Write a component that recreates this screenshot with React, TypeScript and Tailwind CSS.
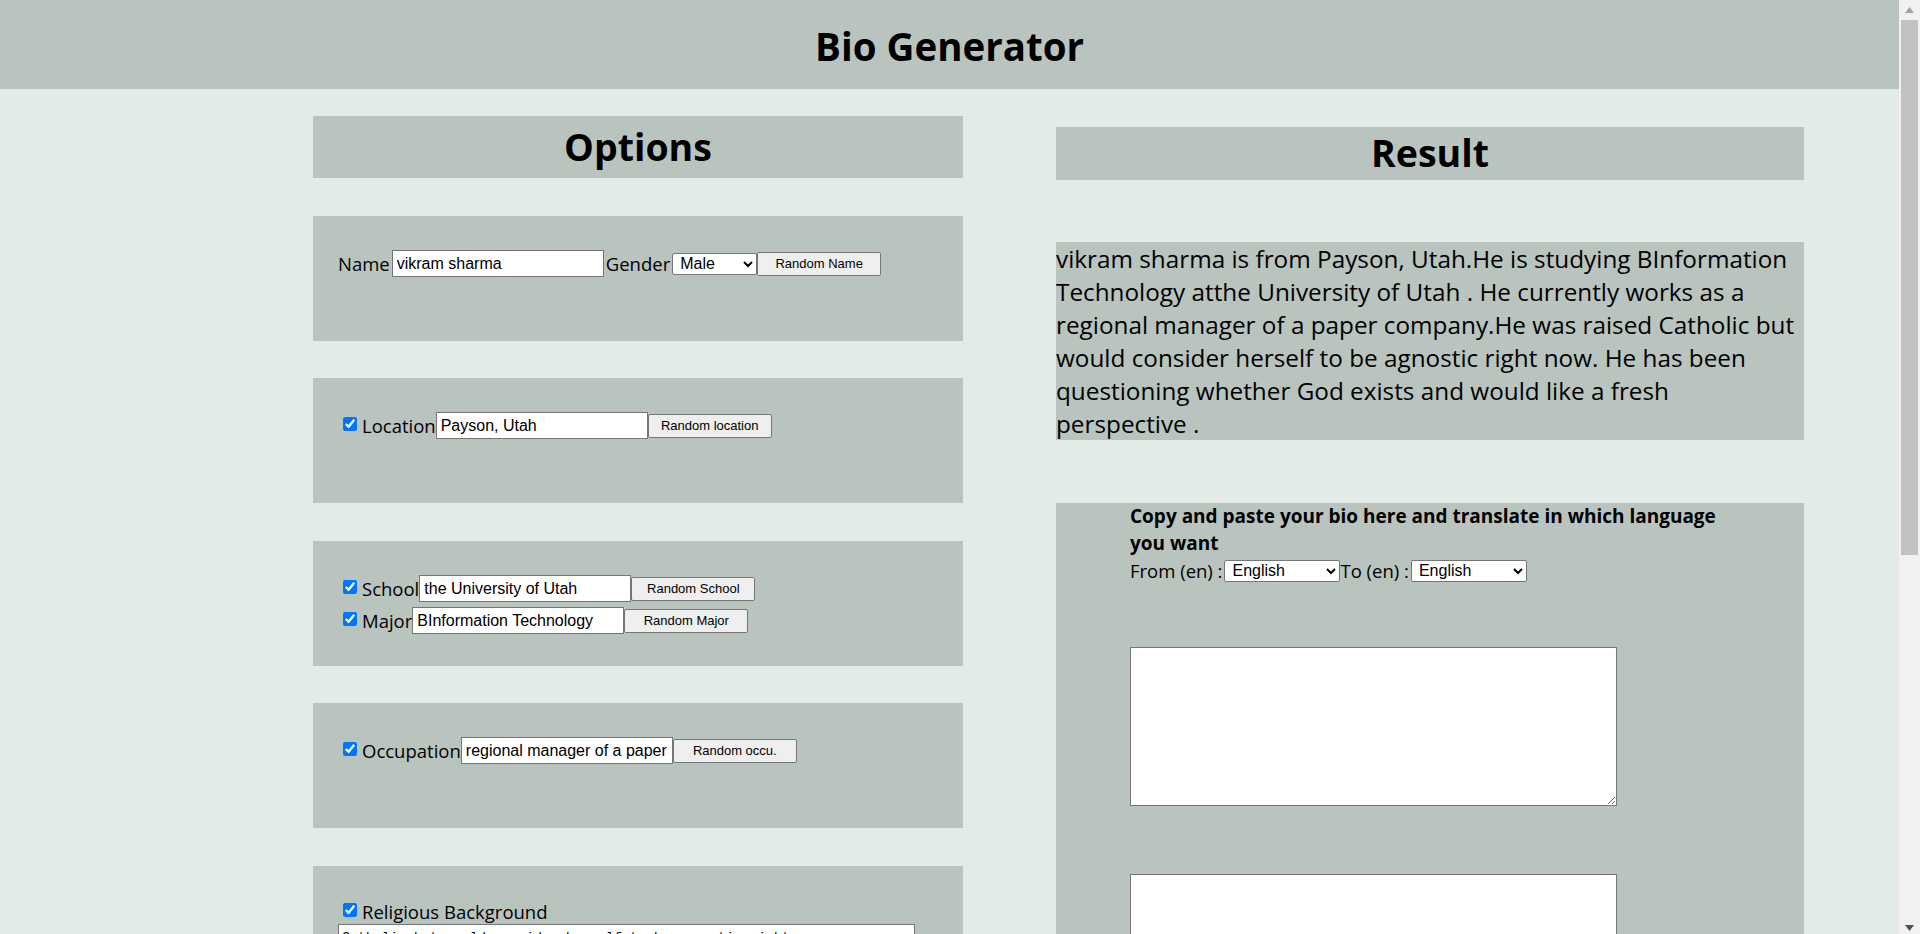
import React from "react";

const sans = "font-['Open_Sans','Noto_Sans',sans-serif]";
const arial = "font-['Liberation_Sans',Arial,sans-serif]";

const TextField = ({ value }: { value: string }) => (
  <input
    type="text"
    defaultValue={value}
    className={`h-[27px] w-[212px] border border-[#767676] bg-white px-[4px] text-[16px] text-black ${arial}`}
  />
);

const RandomButton = ({ label }: { label: string }) => (
  <button
    type="button"
    className={`h-[24px] w-[124px] rounded-[2px] border border-[#767676] bg-[#efefef] text-[13px] text-black ${arial}`}
  >
    {label}
  </button>
);

const Check = () => (
  <input type="checkbox" defaultChecked className="-mt-[3px] mr-[5px] ml-[5px] h-[14px] w-[14px] accent-[#0075ff]" />
);

const Select = ({ value, options, width }: { value: string; options: string[]; width: string }) => (
  <select
    defaultValue={value}
    className={`${width} h-[22px] rounded-[2px] border border-[#767676] bg-white pl-[3px] text-[16px] text-black ${arial}`}
  >
    {options.map((o) => (
      <option key={o}>{o}</option>
    ))}
  </select>
);

const Panel = ({ children, className = "" }: { children: React.ReactNode; className?: string }) => (
  <div className={`h-[125px] w-[650px] bg-[#bac4be] pl-[25px] pt-[34px] text-[18.5px] text-black ${className}`}>
    {children}
  </div>
);

const Scrollbar = () => (
  <aside className="flex h-[934px] w-[21px] shrink-0 flex-col items-center bg-[#f1f1f1]">
    <svg width="9" height="6" viewBox="0 0 9 6" className="mt-[7px]">
      <path d="M4.5 0 L9 6 L0 6 Z" fill="#a3a3a3" />
    </svg>
    <div className="mt-[7px] h-[535px] w-[17px] bg-[#c1c1c1]" />
    <div className="flex-1" />
    <svg width="9" height="6" viewBox="0 0 9 6" className="mb-[3px]">
      <path d="M0 0 L9 0 L4.5 6 Z" fill="#505050" />
    </svg>
  </aside>
);

export default function App() {
  const languages = ["English", "Spanish", "French", "German", "Hindi", "Chinese"];

  return (
    <div className={`flex h-[934px] overflow-hidden bg-[#e2ebe6] text-black ${sans}`}>
      <div className="min-w-0 flex-1">
        <header className="flex h-[89px] items-center justify-center bg-[#bac4be]">
          <h1 className="pt-[4px] text-[38.5px] font-bold">Bio Generator</h1>
        </header>

        <main className="flex items-start pl-[313px]">
          {/* options column */}
          <section className="flex w-[650px] flex-col pt-[27px]">
            <div className="flex h-[62px] items-center justify-center bg-[#bac4be]">
              <h2 className="text-[37.5px] font-bold">Options</h2>
            </div>

            <Panel className="mt-[38px]">
              <div className="flex items-center">
                <span className="pr-[2px]">Name</span>
                <TextField value="vikram sharma" />
                <span className="px-[2px]">Gender</span>
                <Select value="Male" options={["Male", "Female", "Other"]} width="w-[85px]" />
                <RandomButton label="Random Name" />
              </div>
            </Panel>

            <Panel className="mt-[37px]">
              <div className="flex items-center">
                <Check />
                <span>Location</span>
                <TextField value="Payson, Utah" />
                <RandomButton label="Random location" />
              </div>
            </Panel>

            <Panel className="mt-[38px]">
              <div className="flex flex-col gap-[4px]">
                <div className="flex items-center">
                  <Check />
                  <span>School</span>
                  <TextField value="the University of Utah" />
                  <RandomButton label="Random School" />
                </div>
                <div className="flex items-center">
                  <Check />
                  <span>Major</span>
                  <TextField value="BInformation Technology" />
                  <RandomButton label="Random Major" />
                </div>
              </div>
            </Panel>

            <Panel className="mt-[37px]">
              <div className="flex items-center">
                <Check />
                <span>Occupation</span>
                <TextField value="regional manager of a paper company" />
                <RandomButton label="Random occu." />
              </div>
            </Panel>

            <div className="mt-[38px] h-[200px] w-[650px] bg-[#bac4be] pl-[25px] pt-[33px] text-[18.5px]">
              <div className="flex h-[25px] items-center">
                <Check />
                <span>Religious Background</span>
              </div>
              <textarea
                defaultValue="Catholic but would consider herself to be agnostic right now"
                className="block h-[60px] w-[577px] resize-y border border-[#767676] bg-white px-[3px] pt-[3px] font-['Liberation_Mono',monospace] text-[13.33px] text-black"
              />
            </div>
          </section>

          {/* result column */}
          <section className="ml-[93px] flex w-[748px] flex-col pt-[38px]">
            <div className="flex h-[53px] items-center justify-center bg-[#bac4be]">
              <h2 className="text-[37.5px] font-bold">Result</h2>
            </div>

            <p className="mt-[62px] bg-[#bac4be] text-[24.3px] leading-[33px]">
              vikram sharma is from Payson, Utah.He is studying BInformation Technology atthe University of Utah . He
              currently works as a regional manager of a paper company.He was raised Catholic but would consider
              herself to be agnostic right now. He has been questioning whether God exists and would like a fresh
              perspective .
            </p>

            <div className="mt-[63px] h-[600px] bg-[#bac4be]">
              <div className="mx-auto w-[600px]">
                <p className="text-[19px] font-bold leading-[27px]">
                  Copy and paste your bio here and translate in which language you want
                </p>
                <div className="flex h-[27px] items-center text-[18.5px]">
                  <span className="pr-[2px]">From (en) :</span>
                  <Select value="English" options={languages} width="w-[116px]" />
                  <span className="pr-[2px]">To (en) :</span>
                  <Select value="English" options={languages} width="w-[116px]" />
                </div>
                <textarea className="mt-[63px] block h-[159px] w-[487px] border border-[#767676] bg-white" />
                <textarea className="mt-[68px] block h-[159px] w-[487px] border border-[#767676] bg-white" />
              </div>
            </div>
          </section>
        </main>
      </div>
      <Scrollbar />
    </div>
  );
}
